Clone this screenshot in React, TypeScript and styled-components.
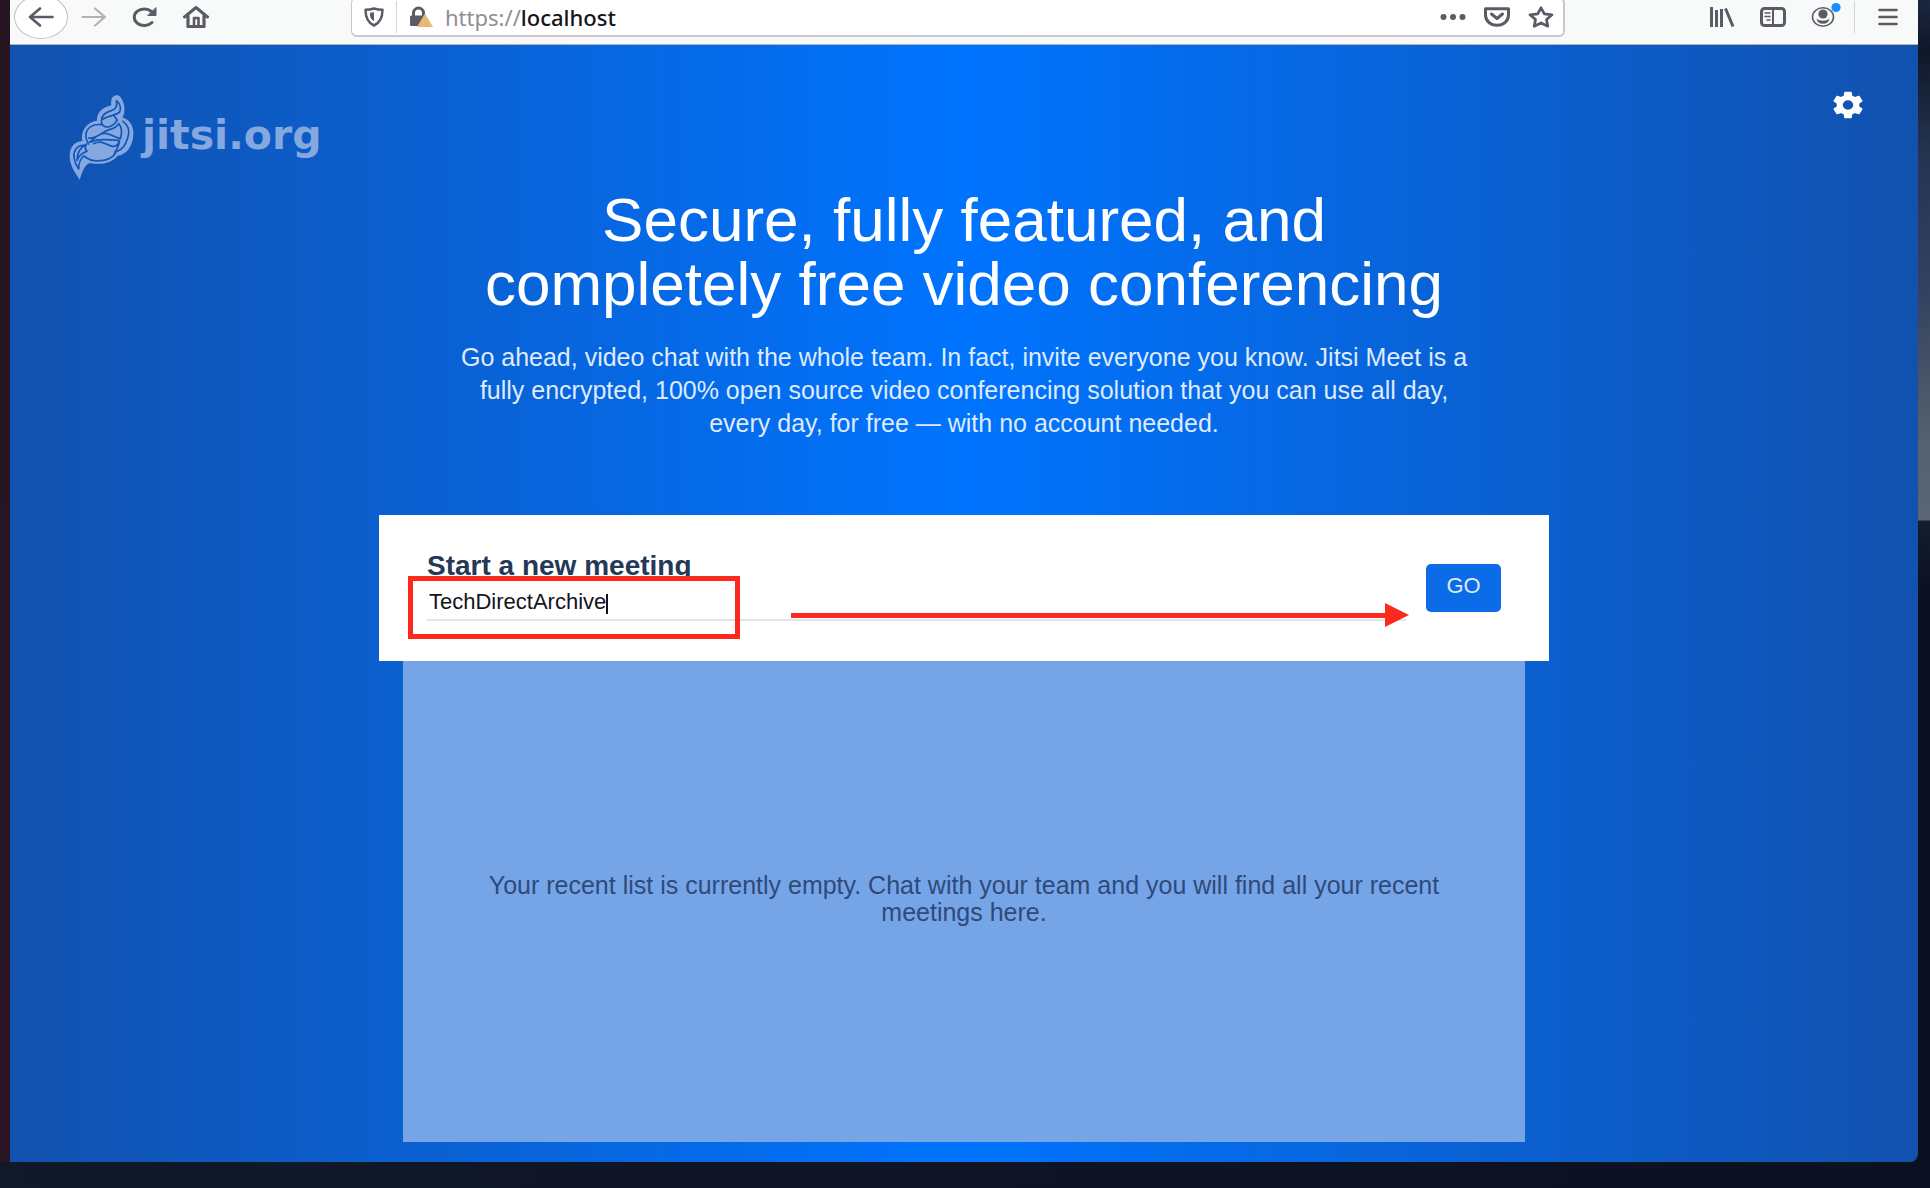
import React, { useState } from 'react';
import styled, { createGlobalStyle } from 'styled-components';

const red = '#fc2a1c';
const ink = '#5b5b66';
const sans = '"Liberation Sans", Arial, sans-serif';

const GlobalStyle = createGlobalStyle`
  *, *::before, *::after { box-sizing: border-box; }
  body { margin: 0; font-family: ${sans}; background: #0b1120; }
  button { font: inherit; border: 0; padding: 0; background: none; cursor: pointer; }
  svg { display: block; }
`;

const Desktop = styled.div`
  display: flex;
  min-height: 100vh;
  padding: 0 12px 26px 10px;
  background:
    linear-gradient(90deg, #111829, #0b1120) bottom / 100% 26px no-repeat,
    linear-gradient(#1b2742 0, #0f1729 50px, #24334f 150px, #34435f 300px, #56616f 440px, #5b6675 520px, #141c2e 521px, #0a101f 600px) right / 12px 100% no-repeat,
    linear-gradient(#261420, #2a1424) left / 10px 100% no-repeat,
    #0b1120;
`;

const BrowserWindow = styled.div`
  flex: 1;
  display: flex;
  flex-direction: column;
  overflow: hidden;
  border-radius: 0 0 8px 0;
`;

const Toolbar = styled.header`
  display: flex;
  align-items: center;
  box-sizing: content-box;
  height: 34px;
  padding: 0 17px 10px 4px;
  background: #f8f9f9;
  border-bottom: 1px solid #b5b2b5;
  color: ${ink};
`;

const NavGroup = styled.nav`
  display: flex;
  align-items: center;
  gap: 25px;
  width: 337px;
`;

const ToolButton = styled.button<{ $faded?: boolean }>`
  display: grid;
  place-items: center;
  width: 26px;
  height: 26px;
  color: ${(p) => (p.$faded ? '#b3b1b5' : ink)};
`;

const BackButton = styled(ToolButton)`
  width: 54px;
  height: 44px;
  margin-right: -12px;
  flex: none;
  border: 1px solid #c3bfc8;
  border-radius: 50%;
  background: #fff;
`;

const AddressBar = styled.div`
  flex: 1;
  display: flex;
  align-items: center;
  gap: 12px;
  height: 40px;
  padding: 0 9px 0 12px;
  border: 1px solid #c9c6cf;
  border-width: 1px 2px 2px 1px;
  border-radius: 6px;
  background: #fff;
`;

const Divider = styled.span`
  width: 1px;
  height: 32px;
  background: #d5d0de;
`;

const Address = styled.a`
  flex: 1;
  font: 22px/28px "Noto Sans", sans-serif;
  color: #8f8e93;
  text-decoration: none;
  strong { font-weight: 500; color: #15141a; }
`;

const AddressActions = styled.div`
  display: flex;
  gap: 18px;
`;

const ToolGroup = styled.div`
  display: flex;
  align-items: center;
  gap: 25px;
  margin-left: 144px;
`;

const MenuGroup = styled.div`
  display: flex;
  align-items: center;
  gap: 20px;
  margin-left: -8px;
`;

const Page = styled.main`
  flex: 1;
  display: flex;
  flex-direction: column;
  align-items: center;
  padding: 0 0 20px;
  background: linear-gradient(90deg, #1251ae 0%, #0074ff 50%, #1251ae 100%);
`;

const Masthead = styled.div`
  align-self: stretch;
  display: flex;
  justify-content: space-between;
  align-items: flex-start;
  height: 143px;
  padding: 44px 52px 0 59px;
`;

const Brand = styled.a`
  display: flex;
  align-items: center;
  gap: 8px;
  padding-top: 6px;
  color: #86a8e1;
  text-decoration: none;
`;

const BrandName = styled.span`
  font: bold 41px/48px "DejaVu Sans", sans-serif;
  padding-bottom: 6px;
`;

const SettingsButton = styled.button`
  color: #fff;
`;

const Title = styled.h1`
  max-width: 1000px;
  margin: 0;
  color: #fff;
  font-size: 62px;
  font-weight: 400;
  line-height: 64px;
  text-align: center;
`;

const Lead = styled.p`
  max-width: 1010px;
  margin: 25px 0 75px;
  color: #dfeaff;
  font-size: 25px;
  line-height: 33px;
  text-align: center;
`;

const MeetingForm = styled.form`
  display: flex;
  align-items: center;
  gap: 20px;
  width: 1170px;
  max-width: 100%;
  padding: 35px 48px 40px;
  background: #fff;
`;

const Field = styled.div`
  position: relative;
  flex: 1;
  display: flex;
  flex-direction: column;
`;

const FieldLabel = styled.label`
  color: #253858;
  font-size: 28px;
  font-weight: 700;
  line-height: 32px;
`;

const RoomInput = styled.input`
  height: 39px;
  padding: 2px 2px 0;
  border: 0;
  border-bottom: 2px solid #e4e2ea;
  outline: 0;
  background: transparent;
  color: #15141a;
  font: 22px/32px ${sans};
`;

const Caret = styled.span`
  position: absolute;
  left: 179px;
  top: 44px;
  width: 2px;
  height: 20px;
  background: #15141a;
`;

const Highlight = styled.span`
  position: absolute;
  left: -19px;
  top: 26px;
  width: 332px;
  height: 63px;
  border: 5px solid ${red};
  pointer-events: none;
`;

const Arrow = styled.span`
  position: absolute;
  left: 364px;
  right: -3px;
  top: 53px;
  height: 24px;
  display: flex;
  align-items: center;
  pointer-events: none;
  &::before { content: ''; flex: 1; height: 5px; background: ${red}; }
  &::after {
    content: '';
    border-left: 24px solid ${red};
    border-top: 12px solid transparent;
    border-bottom: 12px solid transparent;
  }
`;

const GoButton = styled.button`
  width: 75px;
  height: 48px;
  margin-top: 5px;
  padding-bottom: 5px;
  border-radius: 5px;
  background: #0c6be6;
  color: #dce9fc;
  font-size: 22px;
`;

const RecentList = styled.section`
  flex: 1;
  display: flex;
  align-items: center;
  justify-content: center;
  width: 1122px;
  max-width: 96%;
  padding: 0 72px 6px;
  background: #75a5e7;
  color: #2f4a7a;
  font-size: 25px;
  line-height: 27px;
  text-align: center;
  p { margin: 0; }
`;

const stroke = { fill: 'none', stroke: 'currentColor', strokeWidth: 2.6, strokeLinecap: 'round', strokeLinejoin: 'round' } as const;

const BackIcon = () => (
  <svg width="26" height="20" viewBox="0 0 26 20" {...stroke}><path d="M24.500 10H2M12 1.500 2 10l10 8.500" /></svg>
);
const ForwardIcon = () => (
  <svg width="26" height="20" viewBox="0 0 26 20" {...stroke} strokeWidth={2.2}><path d="M1.500 10H24M14 1.500 24 10l-10 8.500" /></svg>
);
const ReloadIcon = () => (
  <svg width="26" height="22" viewBox="0 0 26 22" {...stroke} strokeWidth={3}>
    <path d="M20 16.500A10 8.300 0 1 1 19.500 5.500" />
    <path d="M24 2v7.500h-8z" fill="currentColor" strokeWidth={1} />
  </svg>
);
const HomeIcon = () => (
  <svg width="26" height="22" viewBox="0 0 26 22" {...stroke}>
    <path d="M1.500 11 13 1.500 24.500 11" strokeWidth={3} />
    <path d="M5 10v10.500h16V10" strokeWidth={3.2} />
    <path d="M11 20v-8h4.500v8" />
  </svg>
);
const ShieldIcon = () => (
  <svg width="20" height="20" viewBox="0 0 20 20" {...stroke} strokeWidth={2.5}>
    <path d="M10 1.500c3 1 6 1.300 8.500 1.300 0 7-1.500 12.700-8.500 15.700C3 15.500 1.500 9.800 1.500 2.800 4 2.800 7 2.500 10 1.500z" />
    <path d="M9.500 6v7.500C7 12 6.300 9 6.300 6.500z" fill="currentColor" strokeWidth={1} />
  </svg>
);
const LockIcon = () => (
  <svg width="24" height="22" viewBox="0 0 24 22">
    <path d="M4.500 10V7a5 5 0 0 1 10 0v3" fill="none" stroke={ink} strokeWidth="3" />
    <rect x="1" y="9.500" width="14" height="10.500" rx="1.500" fill={ink} />
    <path d="M16 7.500 24 21H8z" fill="#e9b873" />
  </svg>
);
const DotsIcon = () => (
  <svg width="26" height="8" viewBox="0 0 26 8" fill="currentColor"><circle cx="3.500" cy="4" r="3" /><circle cx="13" cy="4" r="3" /><circle cx="22.500" cy="4" r="3" /></svg>
);
const PocketIcon = () => (
  <svg width="26" height="20" viewBox="0 0 26 20" {...stroke}>
    <path d="M1.500 1.800h23V8c0 6-5 10.300-11.500 10.300S1.500 14 1.500 8z" strokeWidth={3} />
    <path d="m7.500 7 5.500 4.500L18.500 7" strokeWidth={3} />
  </svg>
);
const StarIcon = () => (
  <svg width="26" height="22" viewBox="0 0 26 22" {...stroke} strokeWidth={2.8}>
    <path d="m13 1.800 3.300 6 7.700 1-5.500 4.700 1.300 6.700L13 17l-6.800 3.200 1.300-6.700L2 8.800l7.700-1z" />
  </svg>
);
const LibraryIcon = () => (
  <svg width="26" height="20" viewBox="0 0 26 20" fill="none" stroke="currentColor" strokeWidth="3"><path d="M2.500 0v20M7.500 3v17M12.500 2v18M16.500 1.500 24 19.500" /></svg>
);
const SidebarIcon = () => (
  <svg width="26" height="20" viewBox="0 0 26 20" {...stroke}>
    <rect x="1.500" y="1.500" width="23" height="17" rx="3" strokeWidth={3} />
    <path d="M13 2v16" strokeWidth={2} /><path d="M5 6h5M5 9.500h5M7 13h3" strokeWidth={1.5} />
  </svg>
);
const AccountIcon = () => (
  <svg width="30" height="26" viewBox="0 0 30 26" overflow="visible">
    <ellipse cx="12" cy="13" rx="10.500" ry="9.200" fill="none" stroke={ink} strokeWidth="1.600" />
    <circle cx="12" cy="10" r="4.600" fill={ink} />
    <path d="M5.500 14.500c3 3 10 3 13 0-.5 3.500-3 5.200-6.500 5.200s-6-1.700-6.500-5.200z" fill={ink} />
    <circle cx="25" cy="3.500" r="4.600" fill="#1a8cff" />
  </svg>
);
const MenuIcon = () => (
  <svg width="20" height="18" viewBox="0 0 20 18" {...stroke}><path d="M1.500 2h17M1.500 9h17M1.500 16h17" /></svg>
);
const GearIcon = () => (
  <svg width="36" height="32" viewBox="0 0 24 24" preserveAspectRatio="none" fill="currentColor">
    <path d="M19.430 12.980c.04-.32.07-.64.07-.98s-.03-.66-.07-.98l2.110-1.650c.19-.15.24-.42.12-.64l-2-3.460c-.12-.22-.39-.3-.61-.22l-2.490 1c-.52-.4-1.080-.73-1.690-.98l-.38-2.650C14.460 2.180 14.250 2 14 2h-4c-.25 0-.46.18-.49.42l-.38 2.650c-.61.25-1.170.59-1.690.98l-2.490-1c-.23-.09-.49 0-.61.22l-2 3.460c-.13.22-.07.49.12.64l2.110 1.650c-.04.32-.07.65-.07.98s.03.66.07.98l-2.110 1.650c-.19.15-.24.42-.12.64l2 3.460c.12.22.39.3.61.22l2.490-1c.52.4 1.080.73 1.690.98l.38 2.650c.03.24.24.42.49.42h4c.25 0 .46-.18.49-.42l.38-2.650c.61-.25 1.170-.59 1.690-.98l2.490 1c.23.09.49 0 .61-.22l2-3.460c.12-.22.07-.49-.12-.64l-2.110-1.650zM12 15.500a3.500 3.500 0 1 1 0-7 3.500 3.500 0 0 1 0 7z" />
  </svg>
);

const BrandMark = () => (
  <svg width="65" height="85" viewBox="205 283 195 255">
    <path fill="currentColor" d="M237 537C222 514 207 494 207 466c0-26 15-44 38-45-6-30 14-58 44-61-2-25 18-40 43-46-3-18 4-30 16-30 10 0 14 8 17 15 8 16 9 34 1 52 20 4 33 23 32 48-1 34-17 62-47 66-17 21-46 28-80 23-16-2-24 19-34 49z" />
    <g fill="none" stroke="#1156b8" strokeWidth="5" strokeLinecap="round" strokeLinejoin="round">
      <path d="M347 300c3 17 0 25-15 30-17 5-29 12-29 28 14-13 38-10 54-24 5-10 2-25-10-34z" />
      <path d="M302 360c0 14 8 20 20 19 12-2 20-8 26-19M340 345l10 14" />
      <path d="M302 372c-27-3-43 10-46 27-1 12 2 23 8 31M264 412c24 4 38-18 62-25 12-3 22-9 28-18 12 13 10 29 5 45-16-4-30-15-46-16-19-1-30 14-46 26" />
      <path d="M367 362c17 12 21 30 14 50-5 18-15 34-31 40M272 424c24-14 58-4 84-5-3 12-10 19-20 18-20-4-34-21-57-8M357 424c-5 12-6 22-15 31" />
      <path d="M250 434c-22-1-32 17-30 36 2 14 7 25 14 35 0-16 5-30 15-39 12 7 16 13 31 14 27 2 53-4 65-23M258 430c-10 6-19 12-24 25-4 10-5 16-5 24 6-14 15-22 30-27-6-7-9-13-1-22z" />
    </g>
  </svg>
);

export default function App() {
  const [room, setRoom] = useState('TechDirectArchive');
  return (
    <Desktop>
      <GlobalStyle />
      <BrowserWindow>
        <Toolbar>
          <NavGroup aria-label="Browser navigation">
            <BackButton aria-label="Back"><BackIcon /></BackButton>
            <ToolButton aria-label="Forward" $faded><ForwardIcon /></ToolButton>
            <ToolButton aria-label="Reload"><ReloadIcon /></ToolButton>
            <ToolButton aria-label="Home"><HomeIcon /></ToolButton>
          </NavGroup>
          <AddressBar>
            <ShieldIcon />
            <Divider />
            <LockIcon />
            <Address href="https://localhost">https://<strong>localhost</strong></Address>
            <AddressActions>
              <ToolButton aria-label="Page actions"><DotsIcon /></ToolButton>
              <ToolButton aria-label="Save to Pocket"><PocketIcon /></ToolButton>
              <ToolButton aria-label="Bookmark"><StarIcon /></ToolButton>
            </AddressActions>
          </AddressBar>
          <ToolGroup>
            <ToolButton aria-label="Library"><LibraryIcon /></ToolButton>
            <ToolButton aria-label="Sidebars"><SidebarIcon /></ToolButton>
            <ToolButton aria-label="Account"><AccountIcon /></ToolButton>
            <MenuGroup>
              <Divider />
              <ToolButton aria-label="Menu"><MenuIcon /></ToolButton>
            </MenuGroup>
          </ToolGroup>
        </Toolbar>
        <Page>
          <Masthead>
            <Brand href="https://jitsi.org">
              <BrandMark />
              <BrandName>jitsi.org</BrandName>
            </Brand>
            <SettingsButton aria-label="Settings"><GearIcon /></SettingsButton>
          </Masthead>
          <Title>Secure, fully featured, and completely free video conferencing</Title>
          <Lead>
            Go ahead, video chat with the whole team. In fact, invite everyone you know. Jitsi Meet is a
            fully encrypted, 100% open source video conferencing solution that you can use all day,
            every day, for free — with no account needed.
          </Lead>
          <MeetingForm onSubmit={(e) => e.preventDefault()}>
            <Field>
              <FieldLabel htmlFor="room">Start a new meeting</FieldLabel>
              <RoomInput id="room" value={room} onChange={(e) => setRoom(e.target.value)} />
              <Caret />
              <Highlight />
              <Arrow />
            </Field>
            <GoButton type="submit">GO</GoButton>
          </MeetingForm>
          <RecentList>
            <p>Your recent list is currently empty. Chat with your team and you will find all your recent meetings here.</p>
          </RecentList>
        </Page>
      </BrowserWindow>
    </Desktop>
  );
}
